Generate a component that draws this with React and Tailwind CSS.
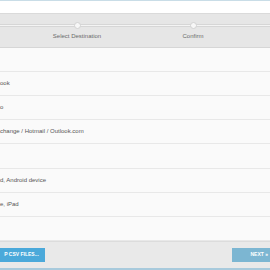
import React from 'react';

const steps = ['Select Destination', 'Confirm'];

const rows = [
  '',
  'ook',
  'o',
  'change / Hotmail / Outlook.com',
  '',
  'd, Android device',
  'e, iPad',
  '',
];

const App = () => {
  return (
    <div
      className="w-[270px] h-[270px] overflow-hidden flex flex-col bg-white border-t border-[#c9dde7]"
      style={{ fontFamily: '"Liberation Sans", Arial, sans-serif' }}
    >
      <div className="h-[12px] bg-white" />

      {/* stepper */}
      <div className="relative h-[35px] bg-[#e6e6e6] border-t border-[#dadada] border-b border-b-[#d6d6d6]">
        <div className="absolute left-0 right-0 top-[10px] h-[3px] bg-[#f4f4f4] border-y border-[#d6d6d6]" />
        <div className="flex pl-[19px]">
          {steps.map((s) => (
            <div key={s} className="w-[116px] flex flex-col items-center pt-[8px]">
              <div className="relative w-[7px] h-[7px] rounded-full bg-[#f7f7f7] border border-[#d2d2d2]" />
              <span className="mt-[4px] text-[6px] leading-[7px] text-[#6b6b6b]">{s}</span>
            </div>
          ))}
        </div>
      </div>

      {/* list */}
      <div className="flex-1 flex flex-col bg-[#fafafa]">
        {rows.map((r, i) => (
          <div
            key={i}
            className="h-[24.2px] flex items-center border-b border-[#e8e8e8] text-[6px] text-[#555]"
          >
            {r}
          </div>
        ))}
      </div>

      {/* footer */}
      <div className="h-[27px] flex items-center justify-between bg-[#e9e9e9] border-t border-[#dcdcdc]">
        <button className="h-[14px] w-[45px] bg-[#4ba9da] text-white text-[5px] font-bold flex items-center justify-center pr-[2px]">
          P CSV FILES...
        </button>
        <button className="h-[14px] w-[38px] bg-[#7cb6d2] text-white text-[5px] font-bold flex items-center justify-end pr-[2px]">
          NEXT »
        </button>
      </div>
      <div className="h-[2px] bg-[#a8cadc]" />
    </div>
  );
};

export default App;
